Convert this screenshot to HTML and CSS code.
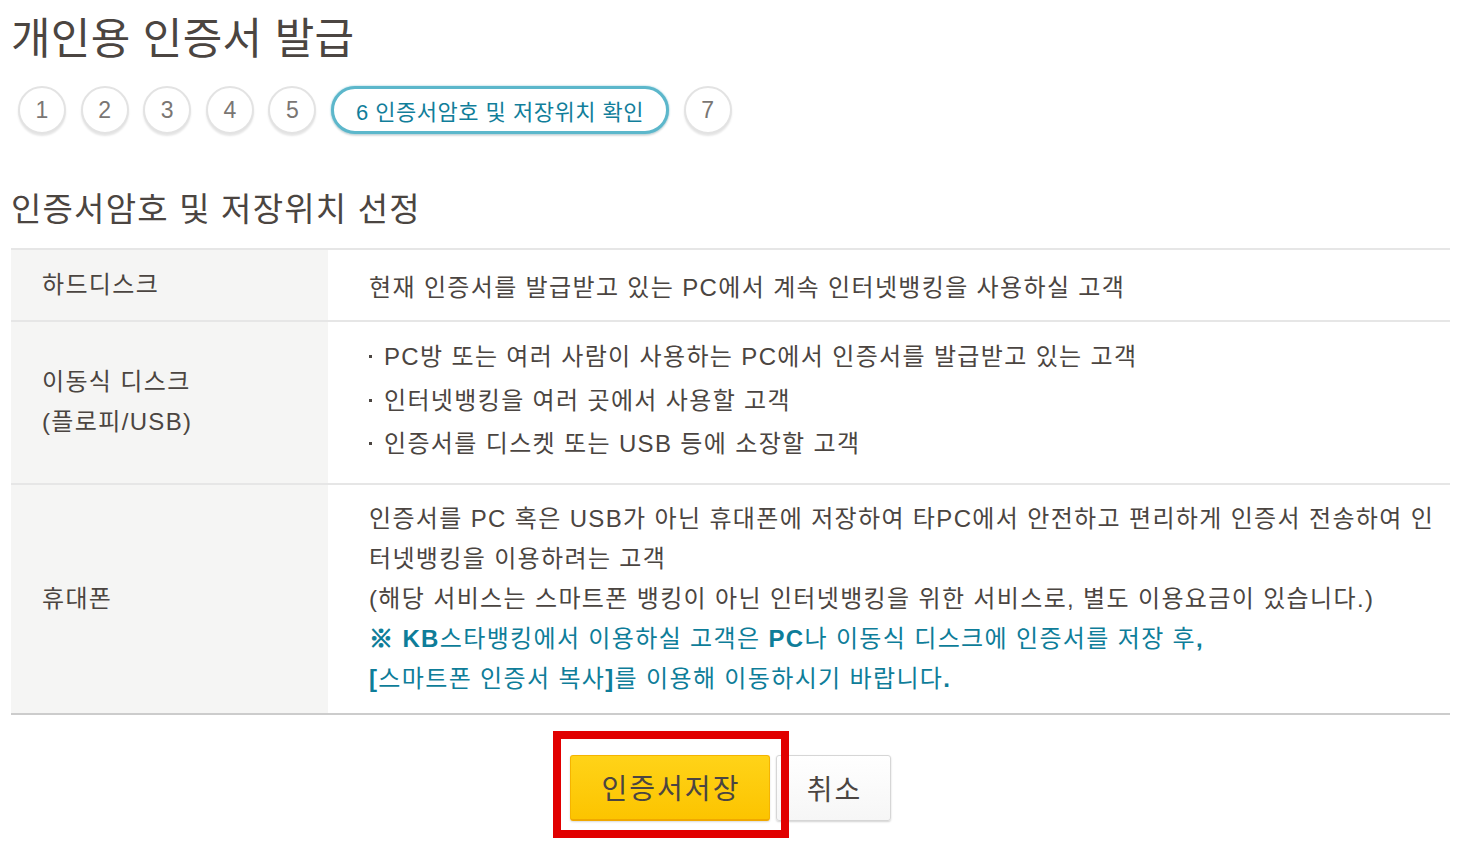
FILE: index.html
```html
<!DOCTYPE html>
<html lang="ko">
<head>
<meta charset="utf-8">
<title>개인용 인증서 발급</title>
<link rel="stylesheet" href="styles.css">
</head>
<body>
<div class="page">
  <h1 class="title">개인용 인증서 발급</h1>
  <ol class="steps">
    <li class="step">1</li>
    <li class="step">2</li>
    <li class="step">3</li>
    <li class="step">4</li>
    <li class="step">5</li>
    <li class="step step-active">6 인증서암호 및 저장위치 확인</li>
    <li class="step">7</li>
  </ol>
  <h2 class="subtitle">인증서암호 및 저장위치 선정</h2>
  <table class="info">
    <tr class="row-hdd">
      <th>하드디스크</th>
      <td>현재 인증서를 발급받고 있는 PC에서 계속 인터넷뱅킹을 사용하실 고객</td>
    </tr>
    <tr class="row-usb">
      <th>이동식 디스크<br>(플로피/USB)</th>
      <td>
        <ul class="bullets">
          <li>PC방 또는 여러 사람이 사용하는 PC에서 인증서를 발급받고 있는 고객</li>
          <li>인터넷뱅킹을 여러 곳에서 사용할 고객</li>
          <li>인증서를 디스켓 또는 USB 등에 소장할 고객</li>
        </ul>
      </td>
    </tr>
    <tr class="row-phone">
      <th>휴대폰</th>
      <td>
        <p class="line">인증서를 PC 혹은 USB가 아닌 휴대폰에 저장하여 타PC에서 안전하고 편리하게 인증서 전송하여 인</p>
        <p class="line">터넷뱅킹을 이용하려는 고객</p>
        <p class="line">(해당 서비스는 스마트폰 뱅킹이 아닌 인터넷뱅킹을 위한 서비스로, 별도 이용요금이 있습니다.)</p>
        <p class="line notice"><span class="mark">※</span> <b>KB</b>스타뱅킹에서 이용하실 고객은 <b>PC</b>나 이동식 디스크에 인증서를 저장 후<b>,</b></p>
        <p class="line notice"><b>[</b>스마트폰 인증서 복사<b>]</b>를 이용해 이동하시기 바랍니다<b>.</b></p>
      </td>
    </tr>
  </table>
  <div class="actions">
    <div class="save-wrap">
      <button class="btn btn-save" type="button">인증서저장</button>
      <span class="highlight"></span>
    </div>
    <button class="btn btn-cancel" type="button">취소</button>
  </div>
</div>
</body>
</html>
```
FILE: styles.css
```css
html, body {
  margin: 0;
  padding: 0;
  background: #ffffff;
}
body {
  font-family: "Liberation Sans", "Noto Sans CJK KR", sans-serif;
  color: #4b4541;
}
.page {
  padding: 13px 10px 30px 11px;
}
.title {
  margin: 0;
  font-size: 43px;
  font-weight: normal;
  line-height: 52px;
  height: 52px;
  letter-spacing: 0.3px;
  color: #4b4541;
}
.steps {
  list-style: none;
  margin: 21px 0 0 7px;
  padding: 0;
  display: flex;
  gap: 14.6px;
}
.step {
  box-sizing: border-box;
  width: 48px;
  height: 48px;
  border-radius: 24px;
  border: 2px solid #e3e3e3;
  box-shadow: 0 2px 2px rgba(0,0,0,0.10);
  background: #fff;
  display: flex;
  align-items: center;
  justify-content: center;
  font-size: 23px;
  color: #7a7673;
}
.step-active {
  width: 338px;
  border: 3px solid #5cb7cb;
  box-shadow: 0 0 2px rgba(92,183,203,0.8), 0 2px 2px rgba(0,0,0,0.12);
  color: #117e9a;
  font-size: 22px;
  letter-spacing: 0.5px;
  white-space: nowrap;
}
.subtitle {
  margin: 56px 0 0;
  font-size: 33px;
  font-weight: normal;
  line-height: 40px;
  letter-spacing: 1.2px;
  color: #4b4541;
}
.info {
  margin-top: 18px;
  width: 1439px;
  border-collapse: collapse;
  border-top: 2px solid #e6e6e6;
  border-bottom: 2px solid #cccccc;
  font-size: 24px;
  letter-spacing: 1.35px;
}
.info tr + tr th, .info tr + tr td {
  border-top: 2px solid #e6e6e6;
}
.info th {
  width: 317px;
  box-sizing: border-box;
  background: #f5f5f4;
  text-align: left;
  font-weight: normal;
  padding: 0 0 0 31px;
  line-height: 40px;
  vertical-align: middle;
}
.info td {
  padding: 0 10px 0 41px;
  vertical-align: middle;
  white-space: nowrap;
}
.row-hdd th, .row-hdd td {
  height: 70px;
}
.row-usb td {
  padding-top: 13px;
  padding-bottom: 17px;
}
.row-phone td {
  padding-top: 14px;
  padding-bottom: 14px;
}
.bullets {
  list-style: none;
  margin: 0;
  padding: 0;
}
.bullets li {
  position: relative;
  padding-left: 15px;
  line-height: 43.5px;
}
.bullets li::before {
  content: "";
  position: absolute;
  left: 0;
  top: 20px;
  width: 3px;
  height: 3px;
  background: #4b4541;
}
.line {
  margin: 0;
  line-height: 40px;
}
.notice {
  color: #0e7d99;
}
.notice b {
  font-weight: bold;
}
.mark {
  font-weight: bold;
  -webkit-text-stroke: 1px #0e7d99;
}
.actions {
  margin-top: 40px;
  display: flex;
  justify-content: center;
  gap: 6px;
}
.save-wrap {
  position: relative;
  display: flex;
}
.btn {
  font-family: "Liberation Sans", "Noto Sans CJK KR", sans-serif;
  box-sizing: border-box;
  height: 66px;
  border-radius: 3px;
  font-size: 28px;
  letter-spacing: 2px;
  text-indent: 2px;
  color: #4b4541;
  cursor: pointer;
  padding: 0;
}
.btn-save {
  width: 200px;
  border: 1px solid #f5b400;
  border-bottom: 2px solid #f0a800;
  background: linear-gradient(#ffd318, #fcc400);
  box-shadow: 0 1px 2px rgba(0,0,0,0.15);
}
.btn-cancel {
  width: 115px;
  border: 1px solid #d6d6d6;
  background: linear-gradient(#ffffff, #f6f6f6);
  box-shadow: 0 1px 2px rgba(0,0,0,0.18);
}
.highlight {
  position: absolute;
  left: -17px;
  top: -24px;
  width: 236px;
  height: 107px;
  box-sizing: border-box;
  border: 8px solid #e10000;
  pointer-events: none;
}
```
